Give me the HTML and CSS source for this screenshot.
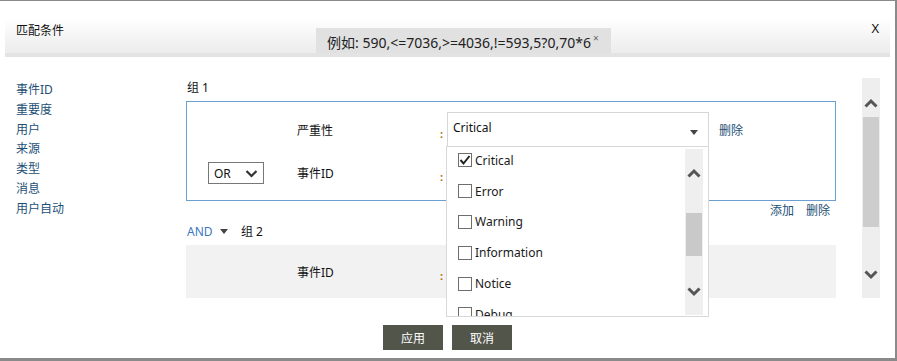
FILE: index.html
```html
<!DOCTYPE html>
<html lang="zh-CN">
<head>
<meta charset="UTF-8">
<meta name="viewport" content="width=device-width, initial-scale=1.0">
<title>匹配条件</title>
<link rel="stylesheet" href="styles.css">
</head>
<body>

<div class="dialog">
    <div class="header">
        <div class="title">匹配条件</div>
        <div class="tip">例如: 590,&lt;=7036,&gt;=4036,!=593,5?0,70*6<span class="tip-x">×</span></div>
        <div class="close">X</div>
    </div>

    <div class="main">
        <ul class="fields">
            <li>事件ID</li>
            <li>重要度</li>
            <li>用户</li>
            <li>来源</li>
            <li>类型</li>
            <li>消息</li>
            <li>用户自动</li>
        </ul>

        <div class="groups">
            <div class="group-title">组 1</div>
            <div class="group group-active">
                <div class="cond-row row-first">
                    <span class="op"></span>
                    <span class="label">严重性</span>
                    <span class="colon">:</span>
                    <div class="value-select">
                        <span class="value-text">Critical</span>
                        <span class="caret"></span>
                        <div class="dropdown">
                            <ul class="dd-list">
                                <li><span class="check checked"><svg width="12" height="12" viewBox="0 0 12 12"><polyline points="1.5,6 4.5,9.5 10.5,2" fill="none" stroke="#222" stroke-width="2"/></svg></span>Critical</li>
                                <li><span class="check"></span>Error</li>
                                <li><span class="check"></span>Warning</li>
                                <li><span class="check"></span>Information</li>
                                <li><span class="check"></span>Notice</li>
                                <li><span class="check"></span>Debug</li>
                            </ul>
                            <div class="dd-scroll">
                                <svg class="chev" width="14" height="10" viewBox="0 0 14 10"><polyline points="1.5,8.5 7,3 12.5,8.5" fill="none" stroke="#555" stroke-width="3"/></svg>
                                <div class="dd-thumb"></div>
                                <svg class="chev chev-down" width="14" height="10" viewBox="0 0 14 10"><polyline points="1.5,1.5 7,7 12.5,1.5" fill="none" stroke="#555" stroke-width="3"/></svg>
                            </div>
                        </div>
                    </div>
                    <a class="link del">删除</a>
                </div>
                <div class="cond-row row-second">
                    <div class="op op-select">OR<svg width="13" height="9" viewBox="0 0 13 9"><polyline points="1.5,2 6.5,7 11.5,2" fill="none" stroke="#333" stroke-width="2.2"/></svg></div>
                    <span class="label">事件ID</span>
                    <span class="colon">:</span>
                    <div class="value-select ghost"></div>
                </div>
            </div>
            <div class="group-actions">
                <a class="link">添加</a>
                <a class="link">删除</a>
            </div>
            <div class="group-title">
                <span class="and">AND<span class="and-caret"></span></span>组 2
            </div>
            <div class="group group-muted">
                <div class="cond-row">
                    <span class="op"></span>
                    <span class="label">事件ID</span>
                    <span class="colon">:</span>
                    <div class="value-select ghost"></div>
                </div>
            </div>
        </div>

        <div class="scrollbar">
            <svg class="chev" width="14" height="10" viewBox="0 0 14 10"><polyline points="1.5,8.5 7,3 12.5,8.5" fill="none" stroke="#555" stroke-width="3"/></svg>
            <div class="thumb"></div>
            <svg class="chev chev-down" width="14" height="10" viewBox="0 0 14 10"><polyline points="1.5,1.5 7,7 12.5,1.5" fill="none" stroke="#555" stroke-width="3"/></svg>
        </div>
    </div>

    <div class="footer">
        <button class="btn">应用</button>
        <button class="btn">取消</button>
    </div>
</div>

</body>
</html>
```

FILE: styles.css
```css
body {
    font-family: "Noto Sans", "Noto Sans CJK SC", sans-serif;
    font-size: 12px;
    color: #111;
    margin: 0;
    padding: 0;
}
ul {
    list-style: none;
    margin: 0;
    padding: 0;
}
.dialog {
    width: 895px;
    height: 357px;
    border-top: 1px solid #8a8a8a;
    border-right: 2px solid #8a8a8a;
    border-bottom: 3px solid #8a8a8a;
    background: #fff;
}

/* header */
.header {
    display: flex;
    align-items: flex-start;
    margin: 17px 5px 0 5px;
    height: 35px;
    padding-left: 11px;
    background: linear-gradient(#fff, #ececec);
    border-bottom: 4px solid #e3e3e3;
}
.title {
    width: 300px;
    margin-top: 6px;
    line-height: 14px;
    font-size: 12px;
}
.tip {
    align-self: flex-end;
    width: 295px;
    height: 25px;
    box-sizing: border-box;
    padding: 4px 0 0 11px;
    line-height: 21px;
    font-size: 14px;
    background: #e1e1e1;
    color: #222;
    white-space: nowrap;
}
.tip-x {
    position: relative;
    top: -6px;
    margin-left: 2px;
    font-size: 10px;
    color: #666;
}
.close {
    margin-left: auto;
    margin-right: 11px;
    margin-top: 2px;
    font-size: 13px;
    line-height: 16px;
}

/* main area */
.main {
    display: flex;
    height: 220px;
    margin-top: 21px;
}
.fields {
    width: 186px;
    flex-shrink: 0;
    box-sizing: border-box;
    padding: 2px 0 0 16px;
    line-height: 19.8px;
    color: #1d4f76;
}
.groups {
    width: 650px;
    flex-shrink: 0;
}
.group-title {
    display: flex;
    align-items: center;
    height: 18px;
    margin-bottom: 5px;
    padding-left: 1px;
}
.group {
    position: relative;
    box-sizing: border-box;
    width: 650px;
}
.group-active {
    height: 100px;
    border: 1px solid #6a9fcf;
    padding-top: 10px;
}
.group-muted {
    height: 53px;
    background: #f2f2f2;
    padding: 9px 1px 0;
    margin-top: 3px;
}
.cond-row {
    display: flex;
    align-items: center;
    height: 35px;
}
.row-second {
    height: 22px;
    margin-top: 15px;
}
.op {
    width: 56px;
    margin-left: 21px;
    flex-shrink: 0;
}
.op-select {
    display: flex;
    align-items: center;
    justify-content: space-between;
    box-sizing: border-box;
    height: 22px;
    padding: 0 5px 0 5px;
    border: 1px solid #777;
    font-size: 12px;
}
.label {
    width: 143px;
    margin-left: 33px;
}
.colon {
    width: 7px;
    align-self: flex-start;
    padding-top: 16px;
    font-size: 11px;
    line-height: 12px;
    font-weight: bold;
    color: #b8700a;
}
.row-second .colon {
    padding-top: 9px;
}
.value-select {
    position: relative;
    box-sizing: border-box;
    width: 262px;
    height: 35px;
    border: 1px solid #d6d6d6;
    background: #fff;
    padding: 0 10px 0 5px;
    display: flex;
    align-items: center;
}
.value-text {
    margin-top: -5px;
}
.ghost {
    border-color: #e4e4e4;
}
.row-second .ghost {
    margin-top: -14px;
    margin-bottom: -14px;
    height: 36px;
    align-self: center;
}
.caret {
    margin-left: auto;
    margin-top: 5px;
    border-left: 4px solid transparent;
    border-right: 4px solid transparent;
    border-top: 5px solid #444;
}
.link {
    color: #1d4f76;
    cursor: pointer;
}
.del {
    margin-left: 10px;
}
.group-actions {
    display: flex;
    justify-content: flex-end;
    gap: 12px;
    height: 20px;
    line-height: 20px;
    padding-right: 6px;
    margin-bottom: 1px;
}
.and {
    display: inline-flex;
    align-items: center;
    width: 54px;
    color: #3a78c0;
}
.and-caret {
    margin-left: 7px;
    border-left: 4px solid transparent;
    border-right: 4px solid transparent;
    border-top: 5px solid #444;
}

/* dropdown list */
.dropdown {
    position: absolute;
    left: -2px;
    top: 33px;
    width: 263px;
    height: 171px;
    box-sizing: border-box;
    border: 1px solid #d8d8d8;
    background: #fff;
    overflow: hidden;
    z-index: 5;
}
.dd-list {
    margin-top: -2px;
    padding-left: 11px;
    color: #1a1a1a;
}
.dd-list li {
    display: flex;
    align-items: center;
    height: 30.8px;
}
.check {
    display: inline-flex;
    align-items: center;
    justify-content: center;
    width: 14px;
    height: 14px;
    box-sizing: border-box;
    border: 1px solid #6e6e6e;
    margin-right: 3px;
    background: #fff;
}
.dd-scroll {
    position: absolute;
    left: 238px;
    top: 2px;
    bottom: 1px;
    width: 18px;
    background: #efefef;
}
.dd-scroll .chev {
    position: absolute;
    left: 2px;
    top: 19px;
}
.dd-scroll .chev-down {
    top: auto;
    bottom: 18px;
}
.dd-thumb {
    position: absolute;
    left: 1px;
    right: 1px;
    top: 64px;
    height: 43px;
    background: #c9c9c9;
}

/* outer scrollbar */
.scrollbar {
    position: relative;
    width: 18px;
    flex-shrink: 0;
    margin-left: 26px;
    background: #eeeeee;
}
.scrollbar .chev {
    position: absolute;
    left: 2px;
    top: 20px;
}
.scrollbar .chev-down {
    top: auto;
    bottom: 18px;
}
.thumb {
    position: absolute;
    left: 1px;
    right: 1px;
    top: 39px;
    height: 110px;
    background: #cdcdcd;
}

/* footer */
.footer {
    display: flex;
    justify-content: center;
    gap: 9px;
    margin-top: 27px;
}
.btn {
    width: 60px;
    height: 25px;
    border: none;
    background: #52554a;
    color: #fff;
    font-family: "Noto Sans", "Noto Sans CJK SC", sans-serif;
    font-size: 12px;
    padding: 0;
}
```
